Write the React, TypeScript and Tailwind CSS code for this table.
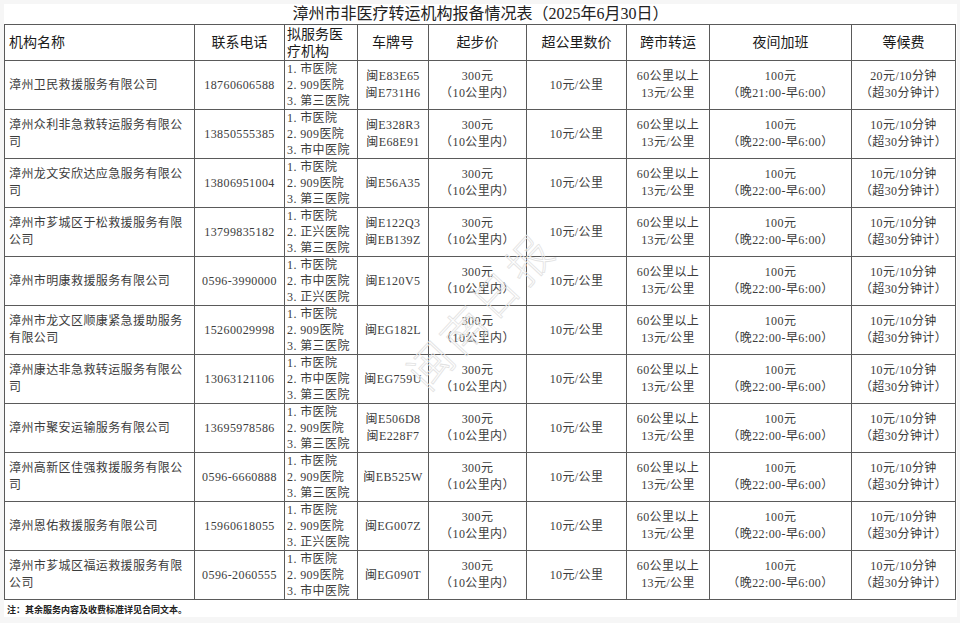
import React from 'react'

const rows = [
  { name: '漳州卫民救援服务有限公司', phone: '18760606588', hosp: ['市医院', '909医院', '第三医院'], plates: ['闽E83E65', '闽E731H6'], night: '晚21:00-早6:00', wait: '20元/10分钟' },
  { name: '漳州众利非急救转运服务有限公司', phone: '13850555385', hosp: ['市医院', '909医院', '市中医院'], plates: ['闽E328R3', '闽E68E91'], night: '晚22:00-早6:00', wait: '10元/10分钟' },
  { name: '漳州龙文安欣达应急服务有限公司', phone: '13806951004', hosp: ['市医院', '909医院', '第三医院'], plates: ['闽E56A35'], night: '晚22:00-早6:00', wait: '10元/10分钟' },
  { name: '漳州市芗城区于松救援服务有限公司', phone: '13799835182', hosp: ['市医院', '正兴医院', '第三医院'], plates: ['闽E122Q3', '闽EB139Z'], night: '晚22:00-早6:00', wait: '10元/10分钟' },
  { name: '漳州市明康救援服务有限公司', phone: '0596-3990000', hosp: ['市医院', '市中医院', '正兴医院'], plates: ['闽E120V5'], night: '晚22:00-早6:00', wait: '10元/10分钟' },
  { name: '漳州市龙文区顺康紧急援助服务有限公司', phone: '15260029998', hosp: ['市医院', '909医院', '第三医院'], plates: ['闽EG182L'], night: '晚22:00-早6:00', wait: '10元/10分钟' },
  { name: '漳州康达非急救转运服务有限公司', phone: '13063121106', hosp: ['市医院', '市中医院', '第三医院'], plates: ['闽EG759U'], night: '晚22:00-早6:00', wait: '10元/10分钟' },
  { name: '漳州市聚安运输服务有限公司', phone: '13695978586', hosp: ['市医院', '909医院', '第三医院'], plates: ['闽E506D8', '闽E228F7'], night: '晚22:00-早6:00', wait: '10元/10分钟' },
  { name: '漳州高新区佳强救援服务有限公司', phone: '0596-6660888', hosp: ['市医院', '909医院', '第三医院'], plates: ['闽EB525W'], night: '晚22:00-早6:00', wait: '10元/10分钟' },
  { name: '漳州恩佑救援服务有限公司', phone: '15960618055', hosp: ['市医院', '909医院', '正兴医院'], plates: ['闽EG007Z'], night: '晚22:00-早6:00', wait: '10元/10分钟' },
  { name: '漳州市芗城区福运救援服务有限公司', phone: '0596-2060555', hosp: ['市医院', '909医院', '市中医院'], plates: ['闽EG090T'], night: '晚22:00-早6:00', wait: '10元/10分钟' },
]

const headers = ['机构名称', '联系电话', '拟服务医疗机构', '车牌号', '起步价', '超公里数价', '跨市转运', '夜间加班', '等候费']
const widths = [190, 90, 73, 71, 98, 100, 83, 142, 104]

const cell = 'border border-[#5a5a5a] p-0 align-middle'

export default function App() {
  return (
    <div
      className="min-h-screen bg-[#f6f6f6] pt-1 pl-1"
      style={{ fontFamily: '"Liberation Serif", "Noto Sans CJK SC", serif' }}
    >
      <div className="relative w-[953px] h-[613px] bg-white">
        <div className="h-[20px] flex items-center justify-center text-[16px] leading-none text-[#222]">
          漳州市非医疗转运机构报备情况表（2025年6月30日）
        </div>

        <table className="table-fixed border-collapse w-[951px] text-[12px] tracking-[0.4px] text-[#3c3c3c]">
          <colgroup>
            {widths.map((w, i) => (
              <col key={i} style={{ width: w }} />
            ))}
          </colgroup>
          <thead>
            <tr>
              {headers.map((h, i) => (
                <th
                  key={h}
                  className={`${cell} h-[36px] font-normal text-[14px] leading-[17px] tracking-normal text-[#1a1a1a] ${
                    i === 0 ? 'text-left pl-1' : i === 2 ? 'text-left pl-0.5 pr-2' : 'text-center'
                  }`}
                >
                  {h}
                </th>
              ))}
            </tr>
          </thead>
          <tbody>
            {rows.map((r) => (
              <tr key={r.name}>
                <td className={`${cell} h-[49px] px-1 leading-[17px]`}>{r.name}</td>
                <td className={`${cell} text-center`}>{r.phone}</td>
                <td className={`${cell} pl-0.5 leading-[16px] whitespace-nowrap`}>
                  {r.hosp.map((h, i) => (
                    <div key={h}>
                      {i + 1}. {h}
                    </div>
                  ))}
                </td>
                <td className={`${cell} text-center leading-[17px]`}>
                  {r.plates.map((p) => (
                    <div key={p}>{p}</div>
                  ))}
                </td>
                <td className={`${cell} text-center leading-[17px]`}>
                  <div>300元</div>
                  <div>（10公里内）</div>
                </td>
                <td className={`${cell} text-center`}>10元/公里</td>
                <td className={`${cell} text-center leading-[17px]`}>
                  <div>60公里以上</div>
                  <div>13元/公里</div>
                </td>
                <td className={`${cell} text-center leading-[17px]`}>
                  <div>100元</div>
                  <div>（{r.night}）</div>
                </td>
                <td className={`${cell} text-center leading-[17px]`}>
                  <div>{r.wait}</div>
                  <div>（超30分钟计）</div>
                </td>
              </tr>
            ))}
          </tbody>
        </table>

        <div className="pl-[3px] pt-[4px] text-[9px] font-bold leading-[12px] text-[#222]">
          注：其余服务内容及收费标准详见合同文本。
        </div>

        {/* watermark */}
        <div className="pointer-events-none absolute left-[479px] top-[309px] -translate-x-1/2 -translate-y-1/2 -rotate-[47deg] whitespace-nowrap text-[44px] font-light leading-none tracking-[4px] text-transparent [-webkit-text-stroke:0.8px_#e2e2e2]">
          闽南日报
        </div>
      </div>
    </div>
  )
}
